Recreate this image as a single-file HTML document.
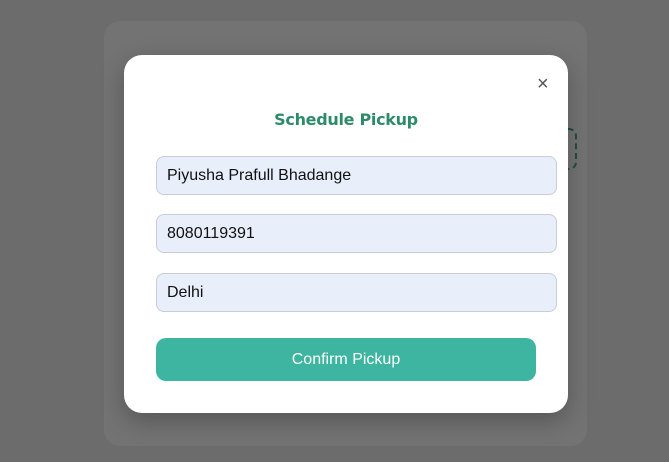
<!DOCTYPE html>
<html><head><meta charset="utf-8"><style>
*{box-sizing:border-box;margin:0;padding:0}
body{width:669px;height:462px;background:#6b6c6b;position:relative;overflow:hidden;font-family:"Liberation Sans",Arial,sans-serif}
.card{position:absolute;left:104px;top:21px;width:483px;height:425px;background:#737373;border-radius:16px}
.dash{position:absolute;left:540px;top:128px;width:37px;height:42px;border:2px dashed #1f4f3e;border-radius:8px}
.modal{position:absolute;left:124px;top:55px;width:444px;height:358px;background:#fff;border-radius:18px;box-shadow:0 8px 24px rgba(0,0,0,.25)}
.x{position:absolute;left:413px;top:19px;font-size:20px;color:#555;line-height:20px;font-family:"Liberation Sans",sans-serif}
h2{position:absolute;left:0;width:100%;top:55px;text-align:center;font-size:16px;font-weight:bold;color:#2e8b6a;font-family:"DejaVu Sans","Liberation Sans",sans-serif;letter-spacing:-0.3px}
.in{position:absolute;left:32px;width:401px;height:39px;background:#e8effb;border:1px solid #c9ccd1;border-radius:8px;font-size:16px;color:#111;padding:10px 0 0 10px}
.btn{position:absolute;left:32px;top:283px;width:380px;height:43px;background:#3db5a0;border-radius:10px;color:#fff;font-size:16px;text-align:center;line-height:43px}
</style></head><body>
<div class="card"></div><div class="dash"></div>
<div class="modal">
<div class="x">×</div>
<h2>Schedule Pickup</h2>
<div class="in" style="top:101px">Piyusha Prafull Bhadange</div>
<div class="in" style="top:159px">8080119391</div>
<div class="in" style="top:218px">Delhi</div>
<div class="btn">Confirm Pickup</div>
</div>
</body></html>
